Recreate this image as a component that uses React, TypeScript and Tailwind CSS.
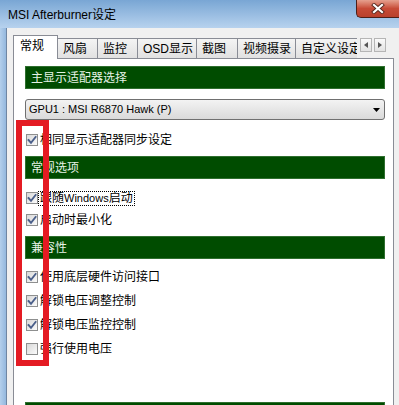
import React from 'react';

const font = "font-['Liberation_Sans','Noto_Sans_CJK_SC',sans-serif]";

const tabs = [
  { label: '风扇', w: 'w-[41px]' },
  { label: '监控', w: 'w-[41px]' },
  { label: 'OSD显示', w: 'w-[60px]' },
  { label: '截图', w: 'w-[42px]' },
  { label: '视频摄录', w: 'w-[59px]' },
];

const GreenBar = ({ children, className = '' }: { children?: React.ReactNode; className?: string }) => (
  <div className={`h-[23px] flex items-center pl-[5px] bg-[#004c00] border border-[#2f6f2f] text-[12px] text-[#e6f2e6] ${className}`}>
    {children}
  </div>
);

const CheckBox = ({ checked }: { checked: boolean }) => (
  <div className="w-[12px] h-[12px] border border-[#8e8f8f] bg-gradient-to-br from-[#d8d8d8] to-[#fbfbfb] flex items-center justify-center shrink-0">
    {checked && (
      <svg width="10" height="10" viewBox="0 0 10 10">
        <path d="M1.5 5 L4 7.8 L8.6 2" fill="none" stroke="#4a5f8a" strokeWidth="1.9" strokeLinecap="square" />
      </svg>
    )}
  </div>
);

const Row = ({ checked, h, focus, children }: { checked: boolean; h: string; focus?: boolean; children: React.ReactNode }) => (
  <div className={`${h} flex items-center pl-[1px]`}>
    <CheckBox checked={checked} />
    <span className={`ml-[1px] text-[12px] text-black leading-[13px] px-px ${focus ? 'outline outline-1 outline-dotted outline-black' : ''}`}>
      {children}
    </span>
  </div>
);

export default function App() {
  return (
    <div className={`w-[399px] h-[405px] overflow-hidden relative bg-[#a8c6e6] ${font}`}>
      {/* title bar */}
      <div className="h-[28px] flex bg-gradient-to-b from-[#79a6d4] to-[#b7d2ee]">
        <div className="pl-[8px] pt-[6px] text-[12px] text-black">MSI Afterburner设定</div>
        <div className="ml-auto w-[43px] h-[18px] rounded-bl-[5px] border-l border-b border-[#4e1f18] bg-gradient-to-b from-[#e5a08f] via-[#c74b37] to-[#b9402c] flex items-center justify-center">
          <svg width="14" height="11" viewBox="0 0 14 11">
            <path d="M3 2 L11 9 M11 2 L3 9" stroke="#5a2a20" strokeWidth="4" strokeLinecap="square" />
            <path d="M3 2 L11 9 M11 2 L3 9" stroke="#ffffff" strokeWidth="2.2" strokeLinecap="square" />
          </svg>
        </div>
      </div>

      <div className="flex h-[377px]">
        {/* left frame */}
        <div className="w-[7px] bg-gradient-to-r from-[#b3cfec] to-[#94b8de] border-r border-[#6f86a3]" />

        {/* client */}
        <div className="flex-1 bg-[#f0f0f0] pl-[6px] pt-[7px]">
          {/* tabs */}
          <div className="h-[23px] flex items-end">
            <div className="relative z-10 w-[45px] h-[24px] -mb-px bg-white border border-b-0 border-[#898c95] pl-[6px] pt-[3px] text-[12px] leading-[14px] text-black">
              常规
            </div>
            {tabs.map(t => (
              <div
                key={t.label}
                className={`${t.w} h-[20px] -ml-px first:ml-0 border border-b-0 border-[#898c95] bg-gradient-to-b from-[#f4f4f4] to-[#e1e1e1] pl-[5px] pt-[3px] text-[12px] leading-[14px] text-black`}
              >
                {t.label}
              </div>
            ))}
            <div className="w-[62px] h-[20px] -ml-px border border-b-0 border-r-0 border-[#898c95] bg-gradient-to-b from-[#f4f4f4] to-[#e1e1e1] pl-[5px] pt-[3px] text-[12px] leading-[14px] text-black overflow-hidden whitespace-nowrap">
              自定义设定
            </div>
            <div className="self-start mt-[3px] ml-[3px] flex gap-[2px]">
              <div className="w-[12px] h-[14px] border border-[#b5b5b5] bg-gradient-to-b from-[#fafafa] to-[#e3e3e3] flex items-center justify-center">
                <svg width="4" height="6" viewBox="0 0 4 6"><path d="M4 0 L0 3 L4 6 Z" fill="#555" /></svg>
              </div>
              <div className="w-[12px] h-[14px] border border-[#b5b5b5] bg-gradient-to-b from-[#fafafa] to-[#e3e3e3] flex items-center justify-center">
                <svg width="4" height="6" viewBox="0 0 4 6"><path d="M0 0 L4 3 L0 6 Z" fill="#555" /></svg>
              </div>
            </div>
          </div>

          {/* panel */}
          <div className="w-[381px] h-[360px] border border-[#898c95] bg-white pl-[11px] pr-[8px] pt-[7px]">
            <GreenBar>主显示适配器选择</GreenBar>

            <div className="mt-[10px] h-[21px] rounded-[3px] border border-[#707070] bg-gradient-to-b from-[#f3f3f3] to-[#dadada] flex items-center pl-[3px] pr-[4px]">
              <span className="text-[11px] text-black">GPU1 : MSI R6870 Hawk (P)</span>
              <svg className="ml-auto" width="7" height="4" viewBox="0 0 7 4"><path d="M0 0 H7 L3.5 4 Z" fill="#000" /></svg>
            </div>

            <div className="mt-[8px]">
              <Row checked h="h-[24px]">相同显示适配器同步设定</Row>
            </div>

            <GreenBar className="mt-[4px]">常规选项</GreenBar>
            <div className="mt-[8px]">
              <Row checked h="h-[22px]" focus>
                跟随<span className="text-[11px]">Windows</span>启动
              </Row>
              <Row checked h="h-[22px]">启动时最小化</Row>
            </div>

            <GreenBar className="mt-[5px]">兼容性</GreenBar>
            <div className="mt-[6px]">
              <Row checked h="h-[24px]">使用底层硬件访问接口</Row>
              <Row checked h="h-[24px]">解锁电压调整控制</Row>
              <Row checked h="h-[24px]">解锁电压监控控制</Row>
              <Row checked={false} h="h-[24px]">强行使用电压</Row>
            </div>

            <GreenBar className="mt-[41px]" />
          </div>
        </div>
      </div>

      {/* red annotation box */}
      <div className="absolute left-[16px] top-[120px] w-[33px] h-[246px] border-[6px] border-[#e41b23]" />
    </div>
  );
}
